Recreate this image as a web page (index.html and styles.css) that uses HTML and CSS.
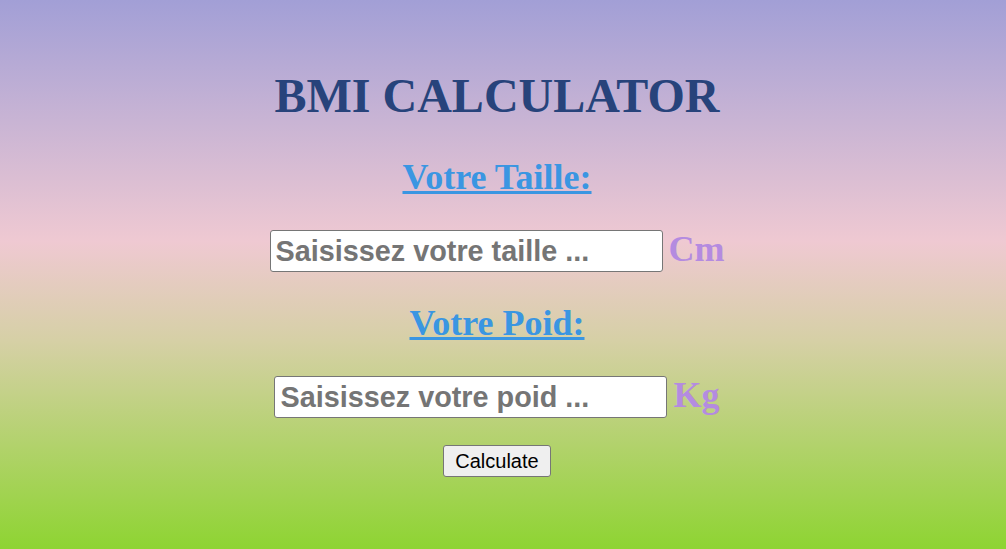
FILE: index.html
```html
<!DOCTYPE html>
<html lang="fr">
<head>
<meta charset="utf-8">
<title>BMI Calculator</title>
<link rel="stylesheet" href="styles.css">
</head>
<body>
<main class="page">
  <h1 class="title">BMI CALCULATOR</h1>
  <h2 class="label">Votre Taille:</h2>
  <div class="row">
    <input class="field" type="text" placeholder="Saisissez votre taille ...">
    <span class="unit">Cm</span>
  </div>
  <h2 class="label">Votre Poid:</h2>
  <div class="row">
    <input class="field" type="text" placeholder="Saisissez votre poid ...">
    <span class="unit">Kg</span>
  </div>
  <button class="btn" type="button">Calculate</button>
</main>
</body>
</html>
```

FILE: styles.css
```css
html, body {
  margin: 0;
  height: 100%;
}
body {
  background: linear-gradient(180deg, #a29fd6 0%, #efc9d2 44%, #d6d0a6 62%, #8ed432 100%);
  font-family: "Liberation Serif", "Times New Roman", serif;
}
.page {
  display: flex;
  flex-direction: column;
  align-items: center;
  padding: 72px 12px 0 0;
}
.title {
  margin: 0 0 6px;
  font-size: 48px;
  line-height: 48px;
  font-weight: bold;
  color: #27437b;
}
.label {
  margin: 33px 0 0;
  font-size: 36px;
  line-height: 36px;
  font-weight: bold;
  color: #3a96e2;
  text-decoration: underline;
}
.row {
  margin-top: 35px;
  display: flex;
  align-items: center;
  gap: 6px;
}
.field {
  box-sizing: border-box;
  width: 393px;
  height: 42px;
  margin: 0;
  padding: 1px 5px;
  border: 1px solid #767676;
  border-radius: 3px;
  background: #fff;
  font-family: "Liberation Sans", Arial, sans-serif;
  font-size: 28.8px;
  font-weight: bold;
}
.field::placeholder {
  color: #757575;
}
.unit {
  margin-bottom: 4px;
  font-size: 36px;
  line-height: 36px;
  font-weight: bold;
  color: #b48be0;
}
.btn {
  margin-top: 27px;
  box-sizing: border-box;
  width: 108px;
  height: 32px;
  padding: 0;
  border: 1px solid #767676;
  border-radius: 3px;
  background: #efefef;
  font-family: "Liberation Sans", Arial, sans-serif;
  font-size: 20px;
  color: #000;
}
```
